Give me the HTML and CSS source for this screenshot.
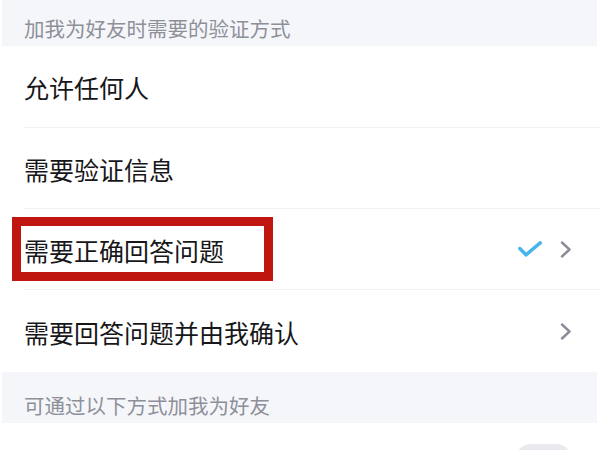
FILE: index.html
```html
<!DOCTYPE html>
<html lang="zh-CN">
<head>
<meta charset="utf-8">
<link rel="stylesheet" href="styles.css">
</head>
<body>
<div class="page">
  <div class="section-title section-title--first">加我为好友时需要的验证方式</div>
  <div class="group">
    <div class="row"><span class="label">允许任何人</span></div>
    <div class="row"><span class="label">需要验证信息</span></div>
    <div class="row row--selected">
      <span class="label">需要正确回答问题</span>
      <span class="mark"></span>
      <svg class="check" width="24" height="16" viewBox="0 0 24 16"><path d="M1.8 7.5 L8 13.8 L22.2 1.8" fill="none" stroke="#47b4ea" stroke-width="3.5" stroke-linecap="round" stroke-linejoin="round"/></svg>
      <svg class="chev" width="12" height="17" viewBox="0 0 12 17"><path d="M2 1.5 L9.5 8.5 L2 15.5" fill="none" stroke="#8c8b99" stroke-width="2.4" stroke-linecap="round" stroke-linejoin="round"/></svg>
    </div>
    <div class="row row--last">
      <span class="label">需要回答问题并由我确认</span>
      <svg class="chev" width="12" height="17" viewBox="0 0 12 17"><path d="M2 1.5 L9.5 8.5 L2 15.5" fill="none" stroke="#8c8b99" stroke-width="2.4" stroke-linecap="round" stroke-linejoin="round"/></svg>
    </div>
  </div>
  <div class="section-title">可通过以下方式加我为好友</div>
  <div class="group">
    <div class="row row--toggle"><span class="label"></span><span class="switch"></span></div>
  </div>
</div>
</body>
</html>
```
FILE: styles.css
```css
html, body {
  margin: 0;
  padding: 0;
  background: #ffffff;
  overflow: hidden;
}
body {
  width: 600px;
  height: 450px;
  font-family: "Noto Sans CJK SC", "Noto Sans", sans-serif;
}
.page {
  display: flex;
  flex-direction: column;
  height: 450px;
  overflow: hidden;
}
.section-title {
  flex: none;
  height: 51px;
  box-sizing: border-box;
  margin: 0 3px 0 2px;
  padding: 20px 0 0 22px;
  background: #f5f6fa;
  color: #8e9099;
  font-size: 20.5px;
  line-height: 26px;
}
.section-title--first {
  height: 46px;
  padding-top: 15px;
}
.group {
  flex: none;
  display: flex;
  flex-direction: column;
}
.row {
  position: relative;
  height: 82px;
  box-sizing: border-box;
  display: flex;
  align-items: center;
  padding: 0 28px 0 1px;
  margin-left: 23px;
  border-bottom: 1px solid #f1f1f4;
}
.row:nth-child(2), .row--selected {
  height: 81px;
}
.row--last {
  border-bottom: none;
}
.label {
  flex: 1;
  color: #17171a;
  font-size: 25px;
  line-height: 32px;
  padding-top: 1px;
}
.check {
  margin-right: 18px;
}
.mark {
  position: absolute;
  left: -11px;
  top: 8px;
  width: 261px;
  height: 64px;
  box-sizing: border-box;
  border: 9px solid #bf1710;
}
.row--toggle {
  border-bottom: none;
  height: 27px;
  align-items: flex-start;
  padding-top: 21px;
  overflow: hidden;
}
.switch {
  width: 57px;
  height: 32px;
  border-radius: 16px;
  background: #e9eaef;
}
```
